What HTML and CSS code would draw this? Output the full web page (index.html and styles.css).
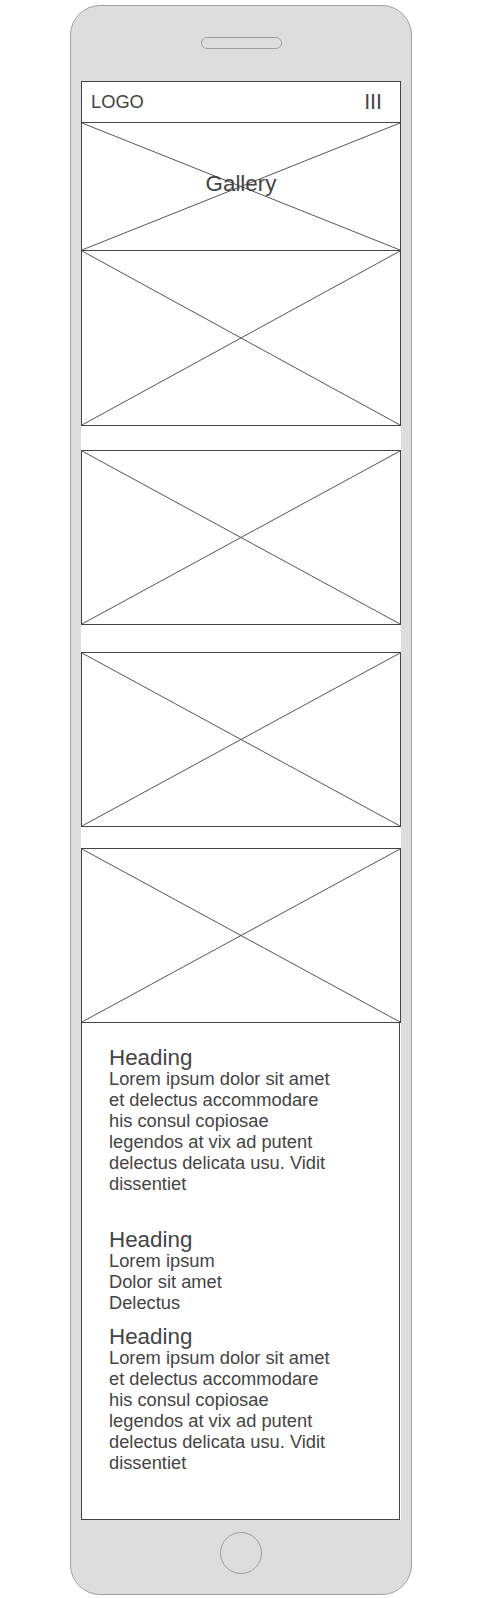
FILE: index.html
```html
<!DOCTYPE html>
<html lang="en">
<head>
    <meta charset="UTF-8">
    <title>Gallery - Mobile Wireframe</title>
    <link rel="stylesheet" href="styles.css">
</head>
<body>
    <div class="phone">
        <div class="speaker"></div>

        <div class="screen">
            <div class="topbar">
                <span class="logo">LOGO</span>
                <span class="menu">III</span>
            </div>

            <div class="placeholder hero">
                <svg class="cross" viewBox="0 0 100 100" preserveAspectRatio="none">
                    <line x1="0" y1="0" x2="100" y2="100" vector-effect="non-scaling-stroke"/>
                    <line x1="100" y1="0" x2="0" y2="100" vector-effect="non-scaling-stroke"/>
                </svg>
                <span class="title">Gallery</span>
            </div>

            <div class="placeholder tall joined">
                <svg class="cross" viewBox="0 0 100 100" preserveAspectRatio="none">
                    <line x1="0" y1="0" x2="100" y2="100" vector-effect="non-scaling-stroke"/>
                    <line x1="100" y1="0" x2="0" y2="100" vector-effect="non-scaling-stroke"/>
                </svg>
            </div>

            <div class="placeholder photo gap-a">
                <svg class="cross" viewBox="0 0 100 100" preserveAspectRatio="none">
                    <line x1="0" y1="0" x2="100" y2="100" vector-effect="non-scaling-stroke"/>
                    <line x1="100" y1="0" x2="0" y2="100" vector-effect="non-scaling-stroke"/>
                </svg>
            </div>

            <div class="placeholder photo gap-b">
                <svg class="cross" viewBox="0 0 100 100" preserveAspectRatio="none">
                    <line x1="0" y1="0" x2="100" y2="100" vector-effect="non-scaling-stroke"/>
                    <line x1="100" y1="0" x2="0" y2="100" vector-effect="non-scaling-stroke"/>
                </svg>
            </div>

            <div class="placeholder photo gap-c">
                <svg class="cross" viewBox="0 0 100 100" preserveAspectRatio="none">
                    <line x1="0" y1="0" x2="100" y2="100" vector-effect="non-scaling-stroke"/>
                    <line x1="100" y1="0" x2="0" y2="100" vector-effect="non-scaling-stroke"/>
                </svg>
            </div>

            <div class="content">
                <div class="block">
                    <h2>Heading</h2>
                    <p>Lorem ipsum dolor sit amet et delectus accommodare his consul copiosae legendos at vix ad putent delectus delicata usu. Vidit dissentiet</p>
                </div>
                <div class="block spaced">
                    <h2>Heading</h2>
                    <p>Lorem ipsum<br>Dolor sit amet<br>Delectus</p>
                </div>
                <div class="block close">
                    <h2>Heading</h2>
                    <p>Lorem ipsum dolor sit amet et delectus accommodare his consul copiosae legendos at vix ad putent delectus delicata usu. Vidit dissentiet</p>
                </div>
            </div>
        </div>

        <div class="home"></div>
    </div>
</body>
</html>
```

FILE: styles.css
```css
body {
    margin: 0;
    background-color: #ffffff;
    font-family: "Liberation Sans", Arial, sans-serif;
    color: #444;
}
.phone {
    box-sizing: border-box;
    width: 342px;
    height: 1590px;
    margin: 5px 0 0 70px;
    background-color: #dddddd;
    border: 1px solid #a0a0a0;
    border-radius: 30px;
    display: flex;
    flex-direction: column;
    align-items: center;
}
.speaker {
    box-sizing: border-box;
    width: 81px;
    height: 12px;
    margin-top: 31px;
    border: 1px solid #a0a0a0;
    border-radius: 6px;
}
.screen {
    width: 320px;
    margin-top: 32px;
    background-color: #ffffff;
}
.topbar {
    box-sizing: border-box;
    height: 42px;
    border: 1px solid #444;
    padding: 0 18px 0 9px;
    display: flex;
    align-items: center;
    justify-content: space-between;
}
.logo {
    font-size: 18.3px;
}
.menu {
    font-size: 21.4px;
}
.placeholder {
    box-sizing: border-box;
    position: relative;
    border: 1px solid #444;
}
.cross {
    position: absolute;
    top: 0;
    left: 0;
    width: 100%;
    height: 100%;
}
.cross line {
    stroke: #555;
    stroke-width: 1;
}
.hero {
    height: 129px;
    margin-top: -1px;
    display: flex;
    align-items: center;
    justify-content: center;
    padding-bottom: 5px;
}
.title {
    position: relative;
    font-size: 22.4px;
}
.tall {
    height: 176px;
}
.joined {
    margin-top: -1px;
}
.photo {
    height: 175px;
}
.gap-a {
    margin-top: 24px;
}
.gap-b {
    margin-top: 27px;
}
.gap-c {
    margin-top: 21px;
}
.content {
    box-sizing: border-box;
    width: 319px;
    height: 498px;
    margin-top: -1px;
    border: 1px solid #444;
    padding: 23px 0 0 27px;
}
.block {
    width: 225px;
}
.block h2 {
    margin: 0;
    font-size: 22.4px;
    line-height: 23px;
    font-weight: normal;
}
.block p {
    margin: 0;
    font-size: 18.3px;
    line-height: 20.9px;
}
.spaced {
    margin-top: 34px;
}
.close {
    margin-top: 11px;
}
.home {
    box-sizing: border-box;
    width: 42px;
    height: 42px;
    margin-top: 12px;
    border: 1px solid #a0a0a0;
    border-radius: 50%;
}
```
